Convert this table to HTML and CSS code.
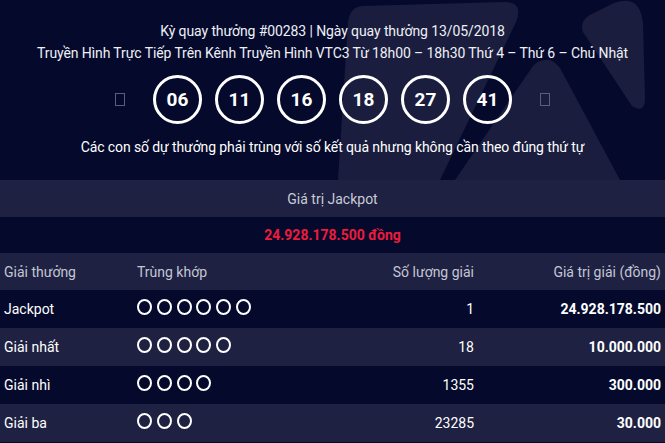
FILE: index.html
```html
<!DOCTYPE html>
<html lang="vi">
<head>
<meta charset="utf-8">
<link rel="stylesheet" href="styles.css">
</head>
<body>
<div class="page">
  <section class="hero">
    <svg class="deco" width="665" height="180" viewBox="0 0 665 180" aria-hidden="true">
      <path d="M362,6 L505,2 Q524,2 516,22 L440,180 L338,180 L348,22 Q350,7 362,6 Z"/>
      <path d="M545,60 Q552,58 560,68 L620,180 L455,180 L533,66 Q538,60 545,60 Z"/>
      <path d="M583,32 Q579,22 590,15 L612,4 Q640,-8 643,24 L645,98 Q645,114 632,106 Z"/>
    </svg>
    <div class="hero-inner">
      <p class="line">Kỳ quay thưởng #00283 | Ngày quay thưởng 13/05/2018</p>
      <p class="line">Truyền Hình Trực Tiếp Trên Kênh Truyền Hình VTC3 Từ 18h00 – 18h30 Thứ 4 – Thứ 6 – Chủ Nhật</p>
      <div class="balls">
        <span class="tofu"></span>
        <span class="ball">06</span>
        <span class="ball">11</span>
        <span class="ball">16</span>
        <span class="ball">18</span>
        <span class="ball">27</span>
        <span class="ball">41</span>
        <span class="tofu"></span>
      </div>
      <p class="line note">Các con số dự thưởng phải trùng với số kết quả nhưng không cần theo đúng thứ tự</p>
    </div>
  </section>
  <div class="bar bar-light jp-label">Giá trị Jackpot</div>
  <div class="bar bar-dark jp-value">24.928.178.500 đồng</div>
  <div class="row row-light head">
    <span>Giải thưởng</span>
    <span>Trùng khớp</span>
    <span class="r">Số lượng giải</span>
    <span class="r">Giá trị giải (đồng)</span>
  </div>
  <div class="row row-dark">
    <span>Jackpot</span>
    <span class="dots"><i></i><i></i><i></i><i></i><i></i><i></i></span>
    <span class="r">1</span>
    <span class="r b">24.928.178.500</span>
  </div>
  <div class="row row-light">
    <span>Giải nhất</span>
    <span class="dots"><i></i><i></i><i></i><i></i><i></i></span>
    <span class="r">18</span>
    <span class="r b">10.000.000</span>
  </div>
  <div class="row row-dark">
    <span>Giải nhì</span>
    <span class="dots"><i></i><i></i><i></i><i></i></span>
    <span class="r">1355</span>
    <span class="r b">300.000</span>
  </div>
  <div class="row row-light">
    <span>Giải ba</span>
    <span class="dots"><i></i><i></i><i></i></span>
    <span class="r">23285</span>
    <span class="r b">30.000</span>
  </div>
</div>
</body>
</html>
```

FILE: styles.css
```css
* { box-sizing: border-box; }
html, body {
  margin: 0;
  padding: 0;
  background: #050a2c;
}
body {
  font-family: "Roboto", sans-serif;
  font-size: 14px;
  color: #eceef5;
  width: 665px;
  height: 443px;
  overflow: hidden;
}
.page { width: 665px; }

.hero {
  position: relative;
  height: 180px;
  background: #050a2c;
  overflow: hidden;
}
.deco {
  position: absolute;
  left: 0;
  top: 0;
}
.deco path { fill: #1a1d3e; }
.hero-inner {
  position: relative;
  padding-top: 20px;
  text-align: center;
}
.line {
  margin: 0;
  line-height: 22px;
  color: #eef0f6;
  letter-spacing: -0.1px;
}
.balls {
  display: flex;
  justify-content: center;
  align-items: center;
  gap: 13px;
  margin-top: 10px;
  height: 50px;
}
.ball {
  width: 49px;
  height: 49px;
  border: 3px solid #ffffff;
  border-radius: 50%;
  display: flex;
  align-items: center;
  justify-content: center;
  font-weight: 700;
  font-size: 19px;
  color: #ffffff;
}
.tofu {
  width: 10px;
  height: 13px;
  border: 1.5px solid #5b5e79;
  margin: 0 15px;
}
.note {
  margin-top: 12px;
  color: #ffffff;
}

.bar {
  display: flex;
  align-items: center;
  justify-content: center;
}
.bar-light { background: #1e2141; }
.bar-dark { background: #050a2c; }
.jp-label {
  height: 37px;
  color: #c9cbd8;
}
.jp-value {
  height: 36px;
  color: #ec1c3d;
  font-weight: 700;
}

.row {
  display: grid;
  grid-template-columns: 133px 1fr 120px 187px;
  align-items: center;
  padding: 0 4px;
  height: 38px;
  color: #ffffff;
}
.row.head {
  height: 37px;
  color: #c4c6d6;
}
.row-light { background: #1e2141; }
.row-dark { background: #050a2c; }
.r { text-align: right; }
.b { font-weight: 700; }
.dots {
  display: flex;
  gap: 4.8px;
  margin-top: -4px;
}
.dots i {
  display: block;
  width: 15px;
  height: 16px;
  border: 2.5px solid #ffffff;
  border-radius: 50%;
}
```
